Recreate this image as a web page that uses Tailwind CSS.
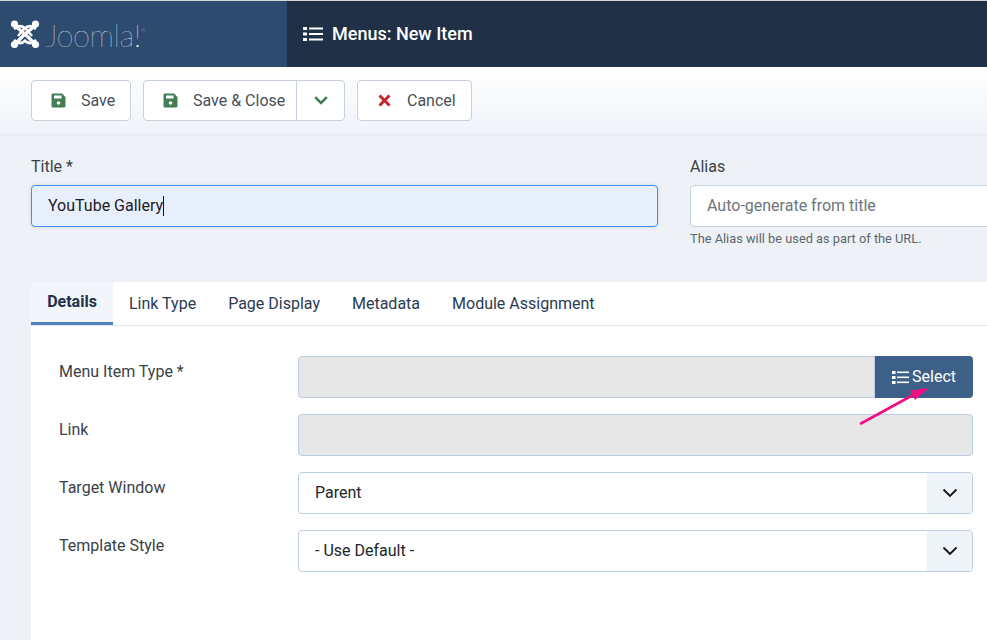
<!DOCTYPE html>
<html lang="en">
<head>
<meta charset="utf-8">
<title>Menus: New Item</title>
<script src="https://cdn.jsdelivr.net/npm/@tailwindcss/browser@4"></script>
</head>
<body class="font-['Roboto',sans-serif] text-[16px] text-[#22262a] bg-[#eef2f6] overflow-hidden">
<div class="w-[987px] h-[640px] overflow-hidden flex flex-col relative">
  <div class="h-px bg-[#d5d5d5] shrink-0"></div>
  <header class="h-[66px] shrink-0 flex bg-[#1f3047] text-white">
    <div class="w-[287px] bg-[#2d4a6f] flex items-center pl-[10px] gap-[5px]">
      <svg width="30" height="30" viewBox="0 0 30 30" fill="none" stroke="#fff" class="shrink-0">
        <path d="M5 7 L15 15 L25 25 M25 7 L15 15 L5 25" stroke-width="3.2"/>
        <path d="M4 10 Q10 4 16 10 L22 17 M26 10 Q20 4 14 10 L8 17 M4 21 Q10 27 16 21 M26 21 Q20 27 14 21" stroke-width="2.6"/>
        <circle cx="4.5" cy="5" r="3.6" fill="#fff" stroke="none"/><circle cx="25.5" cy="5" r="3.6" fill="#fff" stroke="none"/><circle cx="4.5" cy="25.5" r="3.6" fill="#fff" stroke="none"/><circle cx="25.5" cy="25.5" r="3.6" fill="#fff" stroke="none"/>
      </svg>
      <span class="font-['Lato',sans-serif] font-thin text-[31px] leading-none tracking-[-0.5px] relative top-[1px]">Joomla!<sup class="text-[6px] align-super">®</sup></span>
    </div>
    <div class="flex items-center pl-[16px] gap-[9px]">
      <svg width="20" height="16" viewBox="0 0 20 16" fill="#fff"><rect x="0" y="1" width="4" height="3"/><rect x="0" y="6.5" width="4" height="3"/><rect x="0" y="12" width="4" height="3"/><rect x="6" y="1.5" width="14" height="2"/><rect x="6" y="7" width="14" height="2"/><rect x="6" y="12.5" width="14" height="2"/></svg>
      <h1 class="text-[18px] font-medium leading-none">Menus: New Item</h1>
    </div>
  </header>
  <div class="h-[67px] shrink-0 bg-gradient-to-b from-white to-[#eff3f8] flex items-center pl-[31px] gap-[12px] shadow-[0_1px_3px_rgba(0,0,0,0.06)] text-[#495057]">
    <button class="h-[41px] w-[100px] flex items-center bg-white border border-[#c6d0de] rounded-[4px] pl-[19px] gap-[15px]">
      <svg width="15" height="15" viewBox="0 0 15 15"><path d="M1.5 0.5H11L14.5 4V13a1.5 1.5 0 0 1-1.5 1.5H2A1.5 1.5 0 0 1 .5 13V2A1.5 1.5 0 0 1 1.5 .5Z" fill="#457d54"/><rect x="3" y="2.5" width="7.5" height="3" fill="#fff"/><circle cx="7.5" cy="10" r="1.8" fill="#fff"/></svg>
      <span>Save</span>
    </button>
    <div class="h-[41px] w-[202px] flex bg-white border border-[#c6d0de] rounded-[4px]">
      <button class="w-[153px] flex items-center pl-[19px] gap-[15px] border-r border-[#c6d0de]">
        <svg width="15" height="15" viewBox="0 0 15 15"><path d="M1.5 0.5H11L14.5 4V13a1.5 1.5 0 0 1-1.5 1.5H2A1.5 1.5 0 0 1 .5 13V2A1.5 1.5 0 0 1 1.5 .5Z" fill="#457d54"/><rect x="3" y="2.5" width="7.5" height="3" fill="#fff"/><circle cx="7.5" cy="10" r="1.8" fill="#fff"/></svg>
        <span class="whitespace-nowrap">Save &amp; Close</span>
      </button>
      <button class="flex-1 flex items-center justify-center">
        <svg width="14" height="9" viewBox="0 0 14 9" fill="none" stroke="#457d54" stroke-width="2.6"><path d="M1.2 1.2 7 7 12.8 1.2"/></svg>
      </button>
    </div>
    <button class="h-[41px] w-[115px] flex items-center bg-white border border-[#c6d0de] rounded-[4px] pl-[20px] gap-[16px]">
      <svg width="13" height="13" viewBox="0 0 13 13" fill="none" stroke="#c7262d" stroke-width="3"><path d="M1.5 1.5 11.5 11.5M11.5 1.5 1.5 11.5"/></svg>
      <span>Cancel</span>
    </button>
  </div>
  <main class="flex-1 min-h-0 pl-[31px] flex flex-col">
    <div class="flex gap-[32px] pt-[21px] h-[148px] shrink-0">
      <div class="w-[627px] shrink-0">
        <label class="block leading-[24px] text-[#3a4149] mb-[6px]">Title *</label>
        <div class="h-[42px] bg-[#e8effc] border border-[#3f93ee] rounded-[4px] shadow-[0_0_4px_rgba(0,0,0,0.12)] flex items-center pl-[16px] text-[#1c2024]">
          <span>YouTube Gallery</span><span class="w-px h-[20px] bg-[#111]"></span>
        </div>
      </div>
      <div class="flex-1 min-w-0">
        <label class="block leading-[24px] text-[#3a4149] mb-[6px]">Alias</label>
        <div class="h-[42px] w-[320px] bg-white border border-[#c6d0de] rounded-l-[4px] flex items-center pl-[16px] text-[#6d757e]">Auto-generate from title</div>
        <p class="text-[12.8px] leading-[16px] mt-[4px] text-[#5d666f]">The Alias will be used as part of the URL.</p>
      </div>
    </div>
    <div class="flex h-[44px] shrink-0 bg-white border-b border-[#dfe4ec] text-[#2a3b52]">
      <div class="w-[82px] flex items-center justify-center bg-[#f2f5fa] font-bold border-b-[3px] border-[#4f81bd] h-[43px] text-[#24314a]">Details</div>
      <div class="flex items-center pl-[16px] gap-[32px]">
        <span>Link Type</span><span>Page Display</span><span>Metadata</span><span>Module Assignment</span>
      </div>
    </div>
    <section class="flex-1 bg-white pt-[30px] pl-[28px] pr-[14px] flex flex-col gap-[16px]">
      <div class="flex h-[42px]">
        <label class="w-[239px] shrink-0 leading-[32px] text-[#3a4149]">Menu Item Type *</label>
        <div class="flex-1 flex">
          <div class="flex-1 bg-[#e7e7e7] border border-[#bccde2] rounded-l-[4px]"></div>
          <button class="w-[98px] bg-[#3d6089] text-white rounded-r-[4px] flex items-center justify-center gap-[3px]">
            <svg width="17" height="13" viewBox="0 0 17 13" fill="#fff"><rect x="0" y="0" width="3.5" height="3"/><rect x="0" y="5" width="3.5" height="3"/><rect x="0" y="10" width="3.5" height="3"/><rect x="5" y="0.5" width="12" height="1.6"/><rect x="5" y="5.5" width="12" height="1.6"/><rect x="5" y="10.5" width="12" height="1.6"/></svg>
            <span>Select</span>
          </button>
        </div>
      </div>
      <div class="flex h-[42px]">
        <label class="w-[239px] shrink-0 leading-[32px] text-[#3a4149]">Link</label>
        <div class="flex-1 bg-[#e7e7e7] border border-[#bccde2] rounded-[4px]"></div>
      </div>
      <div class="flex h-[42px]">
        <label class="w-[239px] shrink-0 leading-[32px] text-[#3a4149]">Target Window</label>
        <div class="flex-1 flex items-center bg-white border border-[#bccde2] rounded-[4px] pl-[16px] overflow-hidden">
          <span class="flex-1">Parent</span>
          <span class="w-[45px] h-full bg-[#eff4fb] flex items-center justify-center">
            <svg width="16" height="10" viewBox="0 0 16 10" fill="none" stroke="#111" stroke-width="1.8"><path d="M1.5 1.5 8 8 14.5 1.5"/></svg>
          </span>
        </div>
      </div>
      <div class="flex h-[42px]">
        <label class="w-[239px] shrink-0 leading-[32px] text-[#3a4149]">Template Style</label>
        <div class="flex-1 flex items-center bg-white border border-[#bccde2] rounded-[4px] pl-[16px] overflow-hidden">
          <span class="flex-1">- Use Default -</span>
          <span class="w-[45px] h-full bg-[#eff4fb] flex items-center justify-center">
            <svg width="16" height="10" viewBox="0 0 16 10" fill="none" stroke="#111" stroke-width="1.8"><path d="M1.5 1.5 8 8 14.5 1.5"/></svg>
          </span>
        </div>
      </div>
    </section>
  </main>
  <svg class="absolute left-[855px] top-[382px]" width="80" height="48" viewBox="0 0 80 48" fill="none">
    <path d="M6 41.5 L58 13" stroke="#ee0f83" stroke-width="2.6" stroke-linecap="round"/>
    <path d="M74 6 L55 8.5 L60 18 Z" fill="#ee0f83"/>
  </svg>
</div>
</body>
</html>
